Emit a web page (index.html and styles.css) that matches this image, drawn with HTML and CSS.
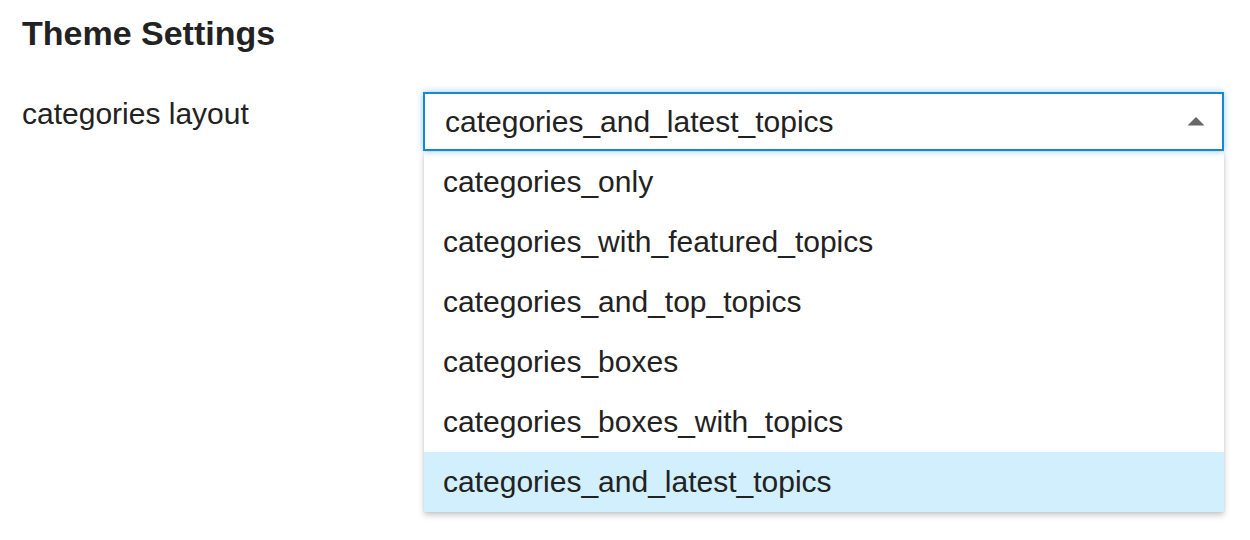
FILE: index.html
```html
<!DOCTYPE html>
<html lang="en">
<head>
<meta charset="utf-8">
<title>Theme Settings</title>
<link rel="stylesheet" href="styles.css">
</head>
<body>
<div class="page">
  <h1 class="title">Theme Settings</h1>
  <div class="setting-row">
    <div class="setting-label">categories layout</div>
    <div class="select-wrap">
      <div class="select-header">
        <span class="select-value">categories_and_latest_topics</span>
        <svg class="caret" width="18" height="10" viewBox="0 0 18 10"><path d="M0.5 9.5 L9 1 L17.5 9.5 Z" fill="#666"/></svg>
      </div>
      <div class="select-menu">
        <div class="option">categories_only</div>
        <div class="option">categories_with_featured_topics</div>
        <div class="option">categories_and_top_topics</div>
        <div class="option">categories_boxes</div>
        <div class="option">categories_boxes_with_topics</div>
        <div class="option is-selected">categories_and_latest_topics</div>
      </div>
    </div>
  </div>
</div>
</body>
</html>
```
FILE: styles.css
```css
html, body {
  margin: 0;
  padding: 0;
  background: #fff;
}
body {
  font-family: "Liberation Sans", Arial, Helvetica, sans-serif;
  color: #222;
  min-height: 540px;
}
.page {
  padding: 16px 22px 0 22px;
}
.title {
  margin: 0;
  font-size: 34px;
  line-height: 34px;
  font-weight: bold;
  color: #222;
}
.setting-row {
  display: flex;
  align-items: flex-start;
  margin-top: 42px;
}
.setting-label {
  width: 401px;
  flex: none;
  font-size: 30px;
  line-height: 36px;
  padding-top: 4px;
}
.select-wrap {
  width: 801px;
  flex: none;
  display: flex;
  flex-direction: column;
  padding-bottom: 10px;
}
.select-header {
  box-sizing: border-box;
  height: 59px;
  border: 2px solid #1a86cb;
  box-shadow: 0 0 7px rgba(30, 145, 220, 0.45);
  display: flex;
  align-items: center;
  justify-content: space-between;
  padding: 1px 17px 0 20px;
  background: #fff;
  position: relative;
  z-index: 2;
}
.select-value {
  font-size: 30px;
  line-height: 54px;
}
.caret {
  display: block;
  margin-top: -2px;
}
.select-menu {
  margin: 1px 0 0 1px;
  width: 800px;
  background: #fff;
  box-shadow: 0 3px 6px rgba(0, 0, 0, 0.22), 0 0 2px rgba(0, 0, 0, 0.08);
  position: relative;
  z-index: 1;
}
.option {
  height: 60px;
  line-height: 60px;
  font-size: 30px;
  padding-left: 19px;
  white-space: nowrap;
}
.option.is-selected {
  background: #d1effc;
}
```
